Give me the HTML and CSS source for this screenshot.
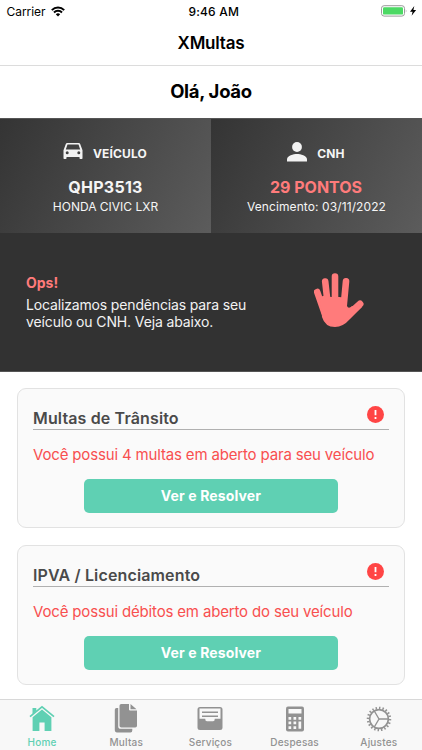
FILE: index.html
```html
<!DOCTYPE html>
<html lang="pt-BR">
<head>
<meta charset="utf-8">
<title>XMultas</title>
<link rel="stylesheet" href="styles.css">
</head>
<body>
<div class="app">
  <div class="status">
    <div class="carrier"><span>Carrier</span>
      <svg width="14" height="11" viewBox="0 0 14 11" fill="none" stroke="#000" stroke-width="2"><path d="M.8 4.1a8.8 8.8 0 0 1 12.4 0M3 6.5a5.6 5.6 0 0 1 8 0"/><path d="M7 10.5 4.8 8.2a3.2 3.2 0 0 1 4.4 0z" fill="#000" stroke="none"/></svg>
    </div>
    <div class="clock">9:46 AM</div>
    <div class="power">
      <svg width="37" height="12" viewBox="0 0 37 12"><rect x=".5" y=".7" width="23" height="10.4" rx="2.6" fill="#fff" stroke="#9b9b9b"/><rect x="2" y="2.2" width="20" height="7.4" rx="1.2" fill="#4cd964"/><path d="M24.8 4.2q1.4 1.7 0 3.4z" fill="#9b9b9b"/><path d="M33.3.9 29 6.7h2.6l-1 4.1 4.5-5.9h-2.7z" fill="#000"/></svg>
    </div>
  </div>
  <header class="navbar">XMultas</header>
  <h1 class="greeting">Olá, João</h1>
  <section class="summary">
    <div class="tile">
      <div class="tile-head">
        <svg class="car" width="20" height="18" viewBox="0 0 20 18" fill="#f2f2f2"><path fill-rule="evenodd" d="M4.200 1h11.600q1 0 1.400 1l2.300 6.200v8q0 .8-.8.8h-1.400q-.8 0-.8-.8V15h-13v1.200q0 .8-.8.8H1.300q-.8 0-.8-.8v-8L2.800 2q.4-1 1.400-1zM4.500 2.500 2.800 7.400h14.400l-1.700-4.900zM4.200 9.300a1.500 1.500 0 1 0 0 3 1.500 1.500 0 0 0 0-3zm11.600 0a1.500 1.500 0 1 0 0 3 1.500 1.500 0 0 0 0-3z"/></svg>
        <span class="veiculo">VEÍCULO</span>
      </div>
      <div class="tile-value plate">QHP3513</div>
      <div class="tile-note model">HONDA CIVIC LXR</div>
    </div>
    <div class="tile">
      <div class="tile-head">
        <svg class="person" width="20" height="20" viewBox="0 0 20 20" fill="#f2f2f2"><circle cx="10" cy="5" r="4.9"/><path d="M0 19.500v-2.300C0 13.800 6.500 12 10 12s10 1.800 10 5.200v2.300z"/></svg>
        <span class="cnh">CNH</span>
      </div>
      <div class="tile-value points">29 PONTOS</div>
      <div class="tile-note due">Vencimento: 03/11/2022</div>
    </div>
  </section>
  <section class="alert">
    <div class="alert-text">
      <strong>Ops!</strong>
      <p><span class="line-a">Localizamos pendências para seu</span><br><span class="line-b">veículo ou CNH. Veja abaixo.</span></p>
    </div>
    <svg class="hand" width="50" height="55" viewBox="0 0 50 55" fill="none" stroke="#ff7b7b" stroke-linecap="round" stroke-linejoin="round"><path d="M3.200 19 10.500 40M11.200 8.500l3 27M21 3.600V35M32 8.400 29.500 35" stroke-width="6.600"/><path d="M46 31 36 40" stroke-width="7"/><path d="M6 24 10.500 22.500 17 24h8.300L33 25V33Q34.500 36.500 38 33L48.300 33.800 36 46Q29 54 21 54 11 54 8 44z" fill="#ff7b7b" stroke="none"/></svg>
  </section>
  <main class="cards">
    <article class="card">
      <div class="card-head"><h2 class="t1">Multas de Trânsito</h2><svg class="warn" width="17" height="17" viewBox="0 0 17 17"><circle cx="8.5" cy="8.5" r="8.5" fill="#ff4545"/><path d="M8.500 4v5.200M8.500 11v1.900" stroke="#fff" stroke-width="1.800"/></svg></div>
      <p class="m1">Você possui 4 multas em aberto para seu veículo</p>
      <button>Ver e Resolver</button>
    </article>
    <article class="card">
      <div class="card-head"><h2 class="t2">IPVA / Licenciamento</h2><svg class="warn" width="17" height="17" viewBox="0 0 17 17"><circle cx="8.5" cy="8.5" r="8.5" fill="#ff4545"/><path d="M8.500 4v5.200M8.500 11v1.900" stroke="#fff" stroke-width="1.800"/></svg></div>
      <p class="m2">Você possui débitos em aberto do seu veículo</p>
      <button>Ver e Resolver</button>
    </article>
  </main>
  <nav class="tabs">
    <a class="tab active"><svg width="28" height="30" viewBox="0 0 28 30" fill="#5fd0b3"><path d="M4.500 8h3.800v3L4.500 14z"/><path d="m2 16.600 12-9.800 12 9.800" fill="none" stroke="#5fd0b3" stroke-width="1.700"/><path d="m14 9.600 9.400 7.700V31h-6.800v-8.600h-5.200V31H4.600V17.300z"/></svg><span>Home</span></a>
    <a class="tab"><svg width="28" height="30" viewBox="0 0 28 30" fill="#929292"><path d="M9.300 4H17v5.400q0 1.100 1.100 1.100h6.900v15.200q0 1.800-1.800 1.800H9.300q-1.800 0-1.800-1.800V5.800Q7.500 4 9.300 4zM18.500 4.100l6 5.100h-6z"/><path d="M6.200 8H4.500Q2.800 8 2.800 9.800v20q0 2.700 2.200 2.700h13.500q1.800 0 1.800-2.300v-1.400H8.800q-2.600 0-2.600-2.600z"/></svg><span>Multas</span></a>
    <a class="tab"><svg width="28" height="30" viewBox="0 0 28 30" fill="#929292"><path fill-rule="evenodd" d="M4 7h20q2.500 0 2.500 2.500v18Q26.500 30 24 30H4q-2.500 0-2.500-2.500v-18Q1.500 7 4 7zM3.500 8.500v10.300h5.700q0 2.500 1.800 2.500h6q1.800 0 1.800-2.500h5.700V8.500z"/><path d="M6 11.500h16v1.500H6zM6 15.500h16v1.500H6z"/></svg><span>Serviços</span></a>
    <a class="tab"><svg width="28" height="30" viewBox="0 0 28 30"><rect x="5" y="6.500" width="18" height="25" rx="2" fill="#929292"/><path d="M7.500 9h13v4.500h-13zM7.500 17h2.700v2.700H7.500zm5 0h2.700v2.700h-2.700zm5 0h2.700v2.700h-2.700zM7.500 21.600h2.700v2.700H7.500zm5 0h2.700v2.700h-2.700zm5 0h2.700v7.200h-2.700zM7.500 26.200h2.700v2.700H7.500zm5 0h2.700v2.700h-2.700z" fill="#f8f8f8"/></svg><span>Despesas</span></a>
    <a class="tab"><svg width="28" height="30" viewBox="0 0 28 30" fill="none" stroke="#929292"><circle cx="14" cy="19" r="11" stroke-width="2.500" pathLength="80" stroke-dasharray="1.700 2.300"/><circle cx="14" cy="19" r="9.400" stroke-width="1.700"/><path d="M14 19h9M14 19l-4.700-8M14 19l-4.700 8" stroke-width="1.400"/></svg><span>Ajustes</span></a>
  </nav>
</div>
</body>
</html>
```
FILE: styles.css
```css
* { box-sizing: border-box; margin: 0; padding: 0; }
body { width: 422px; height: 750px; overflow: hidden; background: #fff; font-family: Inter, "Liberation Sans", sans-serif; color: #000; }
.app { display: flex; flex-direction: column; height: 750px; }
svg { display: block; flex: none; }
span, h2, .tile-value, .tile-note { white-space: nowrap; }
.status { display: grid; grid-template-columns: 1fr auto 1fr; align-items: center; height: 22px; padding: 0 4px 0 6.500px; font-size: 12px; }
.carrier { display: flex; align-items: center; gap: 6px; letter-spacing: -.05px; }
.clock { font-weight: 500; letter-spacing: .2px; padding-left: 3px; }
.power { display: flex; justify-content: flex-end; }
.navbar { height: 44px; border-bottom: 1px solid #dcdcdc; text-align: center; font-size: 17px; line-height: 43px; font-weight: 600; letter-spacing: -.2px; }
.greeting { height: 52px; text-align: center; font-size: 18.500px; line-height: 51px; font-weight: 700; letter-spacing: -.3px; }
.summary { display: grid; grid-template-columns: 1fr 1fr; height: 115.400px; border-top: 1px solid #555; }
.tile { background: linear-gradient(118deg, #343434, #5c5c5c); color: #f5f5f5; display: flex; flex-direction: column; align-items: center; padding-top: 20px; }
.tile-head { display: flex; align-items: center; gap: 10px; height: 26px; font-size: 12px; font-weight: 700; letter-spacing: .15px; margin-right: 1px; }
.tile-head span { padding-top: 3px; }
.tile-head svg { margin-bottom: 1px; }
.tile-head .car { margin-bottom: 3px; }
.tile-value { font-size: 16px; font-weight: 700; line-height: 20px; margin-top: 12px; }
.tile-note { font-size: 12px; line-height: 19px; }
.plate { letter-spacing: .25px; }
.due { letter-spacing: .1px; }
.points { color: #ff7b7b; margin-right: 1px; }
.alert { height: 138.600px; background: #323232; border-bottom: 1px solid #555; display: flex; align-items: flex-start; justify-content: space-between; padding: 39.600px 58px 0 26px; color: #f2f2f2; }
.alert strong { display: block; font-size: 14px; line-height: 20px; color: #ff7b7b; }
.alert p { font-size: 14px; line-height: 17.500px; margin-top: 3px; }
.line-a { letter-spacing: -.15px; }
.line-b { letter-spacing: -.13px; }
.cards { flex: 1; display: flex; flex-direction: column; gap: 17px; padding: 16px 17px 0; }
.card { height: 140px; border: 1px solid #e2e2e2; border-radius: 9px; background: #fafafa; padding: 17px 15px 0; display: flex; flex-direction: column; }
.card-head { display: flex; justify-content: space-between; height: 24px; border-bottom: 1px solid #b0b0b0; padding-right: 5px; }
h2 { font-size: 16px; line-height: 24px; font-weight: 600; color: #4a4a4a; letter-spacing: .14px; }
.card p { font-size: 15px; line-height: 20px; margin-top: 15px; color: #f84f4f; white-space: nowrap; letter-spacing: -.16px; }
button { width: 254px; height: 34px; margin: 14px auto 0; border: 0; border-radius: 5px; background: #5fd0b3; color: #fff; font: 700 14px/33px Inter, sans-serif; letter-spacing: .13px; padding-bottom: 1px; }
.tabs { height: 51px; border-top: 1px solid #d8d8d8; background: #f8f8f8; display: grid; grid-template-columns: repeat(5, 84.200px); }
.tab { display: flex; flex-direction: column; align-items: center; color: #929292; font-size: 10px; font-weight: 500; line-height: 12px; letter-spacing: .2px; }
.tab svg { overflow: visible; margin-bottom: 6px; }
.active { color: #5fd0b3; }
```
